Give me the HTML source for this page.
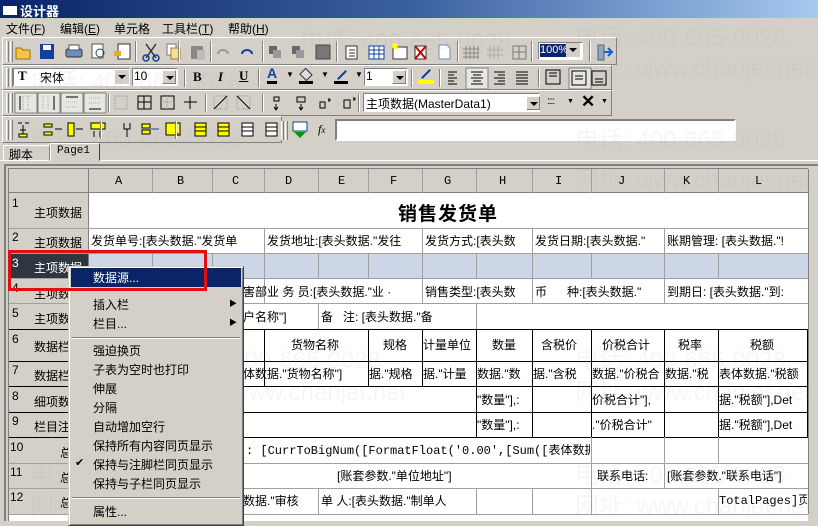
<!DOCTYPE html>
<html><head><meta charset="utf-8">
<style>
*{margin:0;padding:0;box-sizing:border-box}
body{width:818px;height:521px;overflow:hidden;background:#d4d0c8;font-family:"Liberation Sans","Noto Sans CJK SC",sans-serif;font-size:12px;color:#000;position:relative}
.a{position:absolute;white-space:nowrap}
.vl{position:absolute;width:1px;background:#a0a0a0}
.hl{position:absolute;height:1px;background:#a0a0a0}
.bk{background:#000}
.tb{position:absolute;border-top:1px solid #fff;border-left:1px solid #fff;border-right:1px solid #808080;border-bottom:1px solid #808080}
.grip{position:absolute;width:3px;border-left:1px solid #fff;border-right:1px solid #808080}
.sep{position:absolute;width:2px;border-left:1px solid #808080;border-right:1px solid #fff}
.t{position:absolute;white-space:nowrap;font-size:12px;line-height:14px;overflow:hidden}
.rl{position:absolute;font-size:12px;white-space:nowrap}
.mi{position:absolute;left:93px;font-size:12px;white-space:nowrap}
.wm{position:absolute;color:rgba(150,150,150,.09);font-size:24px;white-space:nowrap}
.in{position:absolute;background:#fff;border-top:1px solid #808080;border-left:1px solid #808080;border-right:1px solid #fff;border-bottom:1px solid #fff}
.dd{position:absolute;width:14px;height:14px;background:#d4d0c8;border:1px solid;border-color:#fff #808080 #808080 #fff}
.dd:after{content:"";position:absolute;left:3px;top:5px;border-left:4px solid transparent;border-right:4px solid transparent;border-top:4px solid #000}
</style></head><body>
<div class="a" style="left:0;top:0;width:818px;height:18px;background:linear-gradient(90deg,#0a246a,#3a5fa0 50%,#a6caf0)"></div>
<div class="a" style="left:3px;top:3px;width:14px;height:12px;background:#fff;border-top:3px solid #0a246a"></div>
<div class="a" style="left:20px;top:1px;color:#fff;font-weight:bold;font-size:13px">设计器</div>
<div class="a" style="left:6px;top:20px">文件(<u>F</u>)</div>
<div class="a" style="left:60px;top:20px">编辑(<u>E</u>)</div>
<div class="a" style="left:114px;top:20px">单元格</div>
<div class="a" style="left:162px;top:20px">工具栏(<u>T</u>)</div>
<div class="a" style="left:228px;top:20px">帮助(<u>H</u>)</div>
<div class="tb" style="left:2px;top:37px;width:615px;height:28px"></div>
<div class="tb" style="left:2px;top:65px;width:610px;height:25px"></div>
<div class="tb" style="left:2px;top:90px;width:610px;height:26px"></div>
<div class="tb" style="left:2px;top:116px;width:280px;height:27px"></div>
<div class="grip" style="left:6px;top:41px;height:21px"></div><div class="grip" style="left:10px;top:41px;height:21px"></div>
<div class="grip" style="left:6px;top:68px;height:19px"></div><div class="grip" style="left:10px;top:68px;height:19px"></div>
<div class="grip" style="left:6px;top:93px;height:20px"></div><div class="grip" style="left:10px;top:93px;height:20px"></div>
<div class="grip" style="left:6px;top:120px;height:20px"></div><div class="grip" style="left:10px;top:120px;height:20px"></div>
<svg class="a" style="left:14px;top:40px" width="605" height="24">
<path d="M2 8h5l2 2h7v9H2z" fill="#f4c542" stroke="#a07000"/>
<rect x="26" y="4" width="14" height="15" fill="#1040a0"/><rect x="29" y="5" width="8" height="5" fill="#fff"/>
<rect x="52" y="9" width="16" height="8" rx="2" fill="#6a8cc0" stroke="#333"/><rect x="55" y="5" width="10" height="5" fill="#fff" stroke="#555"/>
<rect x="78" y="4" width="11" height="14" fill="#fff" stroke="#555"/><circle cx="86" cy="13" r="4" fill="none" stroke="#246"/>
<rect x="104" y="4" width="12" height="15" fill="#fff" stroke="#333"/><rect x="100" y="11" width="7" height="5" fill="#e8b020"/>
<path d="M132 4l10 14M142 4l-10 14" stroke="#333" stroke-width="1.5"/><circle cx="132" cy="18" r="3" fill="none" stroke="#1040a0" stroke-width="1.5"/><circle cx="142" cy="18" r="3" fill="none" stroke="#1040a0" stroke-width="1.5"/>
<rect x="153" y="4" width="9" height="11" fill="#fff" stroke="#777"/><rect x="157" y="8" width="9" height="11" fill="#f6e090" stroke="#a08030"/>
<rect x="177" y="6" width="12" height="13" fill="#888"/><rect x="183" y="10" width="8" height="10" fill="#bbb"/>
<path d="M204 14a5 4 0 0 1 10 0" fill="none" stroke="#999" stroke-width="2"/><path d="M228 14a5 4 0 0 1 10 0" fill="none" stroke="#1040a0" stroke-width="2"/>
<rect x="255" y="6" width="8" height="8" fill="#666"/><rect x="259" y="10" width="8" height="8" fill="#999"/>
<rect x="278" y="6" width="8" height="8" fill="#666"/><rect x="282" y="10" width="8" height="8" fill="#999"/>
<rect x="302" y="5" width="14" height="14" fill="#777" stroke="#444"/>
<rect x="332" y="6" width="11" height="13" fill="#fff" stroke="#333"/><path d="M335 10h6M335 13h6M335 16h6" stroke="#333"/>
<rect x="355" y="6" width="15" height="13" fill="#fff" stroke="#1040a0"/><path d="M355 10h15M355 14h15M360 6v13M365 6v13" stroke="#1040a0"/>
<rect x="379" y="7" width="14" height="12" fill="#fff" stroke="#333"/><circle cx="381" cy="6" r="3" fill="#ff0"/>
<rect x="401" y="6" width="11" height="13" fill="#fff" stroke="#333"/><path d="M401 6l11 13M412 6l-11 13" stroke="#c00" stroke-width="2"/>
<path d="M425 5h8l3 3v11h-11z" fill="#fff" stroke="#6a8cc0"/>
<path d="M452 6v13M456 6v13M460 6v13M464 6v13M449 9h16M449 13h16M449 17h16" stroke="#888"/>
<path d="M476 6v13M480 6v13M484 6v13M473 10h16M473 15h16" stroke="#aaa"/>
<rect x="499" y="6" width="13" height="13" fill="none" stroke="#777"/><path d="M505 6v13M499 12h13" stroke="#777"/>
<rect x="584" y="5" width="6" height="15" fill="#8ab" stroke="#567"/><path d="M590 12h8M594 8l4 4-4 4" stroke="#1060d0" stroke-width="2" fill="none"/>
</svg>
<div class="sep" style="left:178px;top:41px;height:21px"></div><div class="sep" style="left:135px;top:41px;height:21px"></div>
<div class="sep" style="left:210px;top:41px;height:21px"></div><div class="sep" style="left:262px;top:41px;height:21px"></div>
<div class="sep" style="left:336px;top:41px;height:21px"></div><div class="sep" style="left:457px;top:41px;height:21px"></div>
<div class="sep" style="left:531px;top:41px;height:21px"></div><div class="sep" style="left:589px;top:41px;height:21px"></div>
<div class="in" style="left:538px;top:42px;width:45px;height:18px"><span style="position:absolute;left:1px;top:1px;background:#0a246a;color:#fff;font-size:11px;line-height:13px">100%</span></div>
<div class="dd" style="left:566px;top:43px;border:none"></div>
<div class="in" style="left:13px;top:68px;width:117px;height:18px"></div>
<div class="a" style="left:18px;top:68px;font-family:'Liberation Serif',serif;font-weight:bold;font-size:13px">T</div>
<div class="a" style="left:40px;top:69px">宋体</div>
<div class="dd" style="left:115px;top:70px;border:none"></div>
<div class="in" style="left:132px;top:68px;width:46px;height:18px"></div>
<div class="a" style="left:134px;top:69px">10</div>
<div class="dd" style="left:162px;top:70px"></div>
<div class="sep" style="left:184px;top:69px;height:18px"></div>
<div class="a" style="left:193px;top:69px;font-weight:bold;font-family:'Liberation Serif',serif;font-size:13px">B</div>
<div class="a" style="left:218px;top:69px;font-weight:bold;font-style:italic;font-family:'Liberation Serif',serif;font-size:13px">I</div>
<div class="a" style="left:239px;top:68px;font-weight:bold;text-decoration:underline;font-family:'Liberation Serif',serif;font-size:13px">U</div>
<div class="sep" style="left:258px;top:69px;height:18px"></div>
<div class="a" style="left:267px;top:66px;font-weight:bold;font-size:14px;color:#1040a0;border-bottom:3px solid #000;line-height:15px">A</div>
<div class="a" style="left:286px;top:70px;font-size:8px">▼</div>
<div class="a" style="left:299px;top:67px;width:14px;height:17px;border-bottom:3px solid #000"><div style="width:10px;height:9px;border:1px solid #333;transform:rotate(45deg);margin:3px 0 0 2px;background:#ddd"></div></div>
<div class="a" style="left:321px;top:70px;font-size:8px">▼</div>
<div class="a" style="left:334px;top:67px;width:14px;height:17px;border-bottom:3px solid #000"><div style="width:12px;height:2px;background:#1040a0;transform:rotate(-45deg);margin:7px 0 0 2px"></div></div>
<div class="a" style="left:355px;top:70px;font-size:8px">▼</div>
<div class="in" style="left:364px;top:68px;width:44px;height:18px"></div>
<div class="a" style="left:366px;top:69px">1</div>
<div class="dd" style="left:392px;top:70px"></div>
<div class="sep" style="left:411px;top:69px;height:18px"></div>
<div class="a" style="left:418px;top:67px;width:16px;height:17px;border-bottom:4px solid #ff0"><div style="width:12px;height:2px;background:#1040a0;transform:rotate(-45deg);margin:6px 0 0 2px"></div></div>
<div class="sep" style="left:439px;top:69px;height:18px"></div>
<svg class="a" style="left:444px;top:67px" width="170" height="22">
<path d="M4 5h9M4 8h6M4 11h9M4 14h6M4 17h9" stroke="#000"/>
<rect x="22" y="1" width="22" height="21" fill="#e8e6e0" stroke="#808080"/><path d="M27 5h12M29 8h8M27 11h12M29 14h8M27 17h12" stroke="#000"/>
<path d="M50 5h11M54 8h7M50 11h11M54 14h7M50 17h11" stroke="#000"/>
<path d="M72 5h12M72 8h12M72 11h12M72 14h12M72 17h12" stroke="#000"/>
<rect x="102" y="3" width="14" height="14" fill="none" stroke="#000"/><path d="M105 6h8M105 9h8" stroke="#000"/>
<rect x="125" y="1" width="22" height="21" fill="#e8e6e0" stroke="#808080"/><rect x="128" y="4" width="14" height="14" fill="none" stroke="#000"/><path d="M131 9h8M131 12h8" stroke="#000"/>
<rect x="148" y="4" width="14" height="14" fill="none" stroke="#000"/><path d="M151 12h8M151 15h8" stroke="#000"/>
</svg>
<div class="sep" style="left:538px;top:69px;height:18px"></div>
<svg class="a" style="left:14px;top:92px" width="350" height="22">
<rect x="1" y="1" width="22" height="20" fill="#e8e6e0" stroke="#808080"/><path d="M6 4v14" stroke="#000"/><path d="M9 4v14M14 4v14M9 4h8M9 18h8" stroke="#aaa" stroke-dasharray="1 1"/>
<rect x="24" y="1" width="22" height="20" fill="#e8e6e0" stroke="#808080"/><path d="M40 4v14" stroke="#000"/><path d="M29 4v14M34 4v14" stroke="#aaa" stroke-dasharray="1 1"/>
<rect x="47" y="1" width="22" height="20" fill="#e8e6e0" stroke="#808080"/><path d="M52 5h12" stroke="#000"/><path d="M52 10h12M52 15h12" stroke="#aaa" stroke-dasharray="1 1"/>
<rect x="70" y="1" width="22" height="20" fill="#e8e6e0" stroke="#808080"/><path d="M75 17h12" stroke="#000"/><path d="M75 6h12M75 11h12" stroke="#aaa" stroke-dasharray="1 1"/>
<rect x="101" y="4" width="12" height="13" fill="none" stroke="#999" stroke-dasharray="1 1"/>
<rect x="124" y="4" width="13" height="13" fill="none" stroke="#000"/><path d="M130 4v13M124 10h13" stroke="#000"/>
<rect x="147" y="4" width="13" height="13" fill="none" stroke="#000"/><path d="M153 4v13M147 10h13" stroke="#999" stroke-dasharray="1 1"/>
<path d="M176 4v13M170 10h13" stroke="#000"/>
<rect x="200" y="4" width="13" height="13" fill="none" stroke="#999" stroke-dasharray="1 1"/><path d="M200 17l13-13" stroke="#000"/>
<rect x="223" y="4" width="13" height="13" fill="none" stroke="#999" stroke-dasharray="1 1"/><path d="M223 4l13 13" stroke="#000"/>
<path d="M260 5h5v4h-5zM262 12v5M260 15l2 3 2-3" stroke="#000" fill="none"/>
<path d="M283 5h8v5h-8zM287 12v5M285 15l2 3 2-3" stroke="#000" fill="none"/>
<path d="M306 10h5v6h-5zM314 8h3M315 6v4" stroke="#000" fill="none"/>
<path d="M330 8h6v8h-6zM339 7h3M340 5v4" stroke="#000" fill="none"/>
</svg>
<div class="sep" style="left:108px;top:94px;height:18px"></div><div class="sep" style="left:205px;top:94px;height:18px"></div><div class="sep" style="left:262px;top:94px;height:18px"></div>
<div class="sep" style="left:358px;top:94px;height:18px"></div>
<div class="in" style="left:363px;top:93px;width:177px;height:19px"></div>
<div class="a" style="left:366px;top:95px;font-size:12px">主项数据(MasterData1)</div>
<div class="dd" style="left:526px;top:96px"></div>
<div class="a" style="left:547px;top:96px;font-size:10px;letter-spacing:-1px">::::</div><div class="a" style="left:567px;top:98px;font-size:7px">▼</div>
<div class="a" style="left:581px;top:92px;font-size:17px;font-weight:bold">✕</div><div class="a" style="left:601px;top:98px;font-size:7px">▼</div>
<svg class="a" style="left:14px;top:119px" width="320" height="22">
<g fill="#ff0" stroke="#000"><path d="M4 4h4M11 4h4M9 6v12M6 11h6" fill="none"/><rect x="5" y="15" width="8" height="3"/>
<rect x="30" y="5" width="8" height="3"/><rect x="30" y="13" width="8" height="3"/><path d="M41 10h7" fill="none"/>
<rect x="54" y="4" width="6" height="13"/><path d="M62 10h7" fill="none"/>
<rect x="77" y="4" width="14" height="6"/><path d="M80 12v6M86 12v6" fill="none"/>
<path d="M110 4v6h6v-6M113 10v8" fill="none"/>
<rect x="128" y="5" width="8" height="4"/><rect x="128" y="11" width="8" height="4"/><path d="M137 10h8" stroke="#1040a0" fill="none"/>
<rect x="152" y="4" width="14" height="12"/><path d="M162 13l4 4" stroke="#c00" fill="none"/>
<rect x="181" y="4" width="11" height="13"/><path d="M181 8h11M181 12h11" fill="none"/>
<rect x="204" y="4" width="11" height="13"/><path d="M204 8h11M204 12h11" fill="none"/>
<rect x="228" y="4" width="11" height="13" fill="#fff"/><path d="M228 8h11M228 12h11" fill="none"/>
<rect x="252" y="4" width="11" height="13" fill="#fff"/><path d="M252 8h11M252 12h11" fill="none"/></g>
<rect x="279" y="3" width="14" height="9" fill="#fff" stroke="#1040a0"/><path d="M280 13h12l-6 6z" fill="#090"/>
</svg>
<div class="sep" style="left:100px;top:121px;height:18px"></div><div class="sep" style="left:175px;top:121px;height:18px"></div>
<div class="grip" style="left:281px;top:121px;height:19px"></div><div class="grip" style="left:285px;top:121px;height:19px"></div>
<div class="a" style="left:318px;top:122px;font-style:italic;font-family:'Liberation Serif',serif;font-size:12px">f<span style="font-size:9px">x</span></div>
<div class="in" style="left:335px;top:119px;width:401px;height:22px;border:2px solid;border-color:#808080 #fff #fff #808080"></div>
<div class="a" style="left:0;top:160px;width:818px;height:2px;border-top:1px solid #fff"></div>
<div class="a" style="left:3px;top:145px;width:47px;height:16px;border:1px solid;border-color:#fff #808080 transparent #fff;padding-left:5px">脚本</div>
<div class="a" style="left:50px;top:143px;width:50px;height:18px;border:1px solid;border-color:#fff #404040 transparent #fff;background:#d4d0c8;padding:1px 0 0 6px;font-family:'Liberation Mono',monospace;font-size:11px">Page1</div>
<div class="a" style="left:4px;top:164px;width:814px;height:357px;border-top:2px solid #808080;border-left:2px solid #808080"></div>
<div class="a" style="left:8px;top:168px;width:800px;height:353px;background:#fff;border-left:1px solid #808080;border-top:1px solid #808080"></div>
<div class="a" style="left:808px;top:168px;width:10px;height:353px;background:#d4d0c8"></div>
<div class="a" style="left:9px;top:169px;width:799px;height:24px;background:#d4d0c8;border-bottom:1px solid #808080"></div>
<div class="a" style="left:9px;top:193px;width:79px;height:321px;background:#d4d0c8"></div>
<div class="a" style="left:9px;top:253px;width:79px;height:25px;background:#2e3640"></div>
<div class="a" style="left:88px;top:253px;width:720px;height:25px;background:#cdd6e6"></div>
<div class="vl" style="left:88px;top:169px;height:345px;background:#808080"></div>
<div class="vl" style="left:808px;top:169px;height:345px;background:#808080"></div>
<div class="a" style="left:88px;top:174px;width:720px;height:14px;font-family:'Liberation Mono',monospace;font-size:12px">
<span class="a" style="left:27px">A</span><span class="a" style="left:89px">B</span><span class="a" style="left:144px">C</span><span class="a" style="left:197px">D</span><span class="a" style="left:250px">E</span><span class="a" style="left:302px">F</span><span class="a" style="left:356px">G</span><span class="a" style="left:411px">H</span><span class="a" style="left:467px">I</span><span class="a" style="left:530px">J</span><span class="a" style="left:595px">K</span><span class="a" style="left:667px">L</span></div>
<div class="vl" style="left:152px;top:169px;height:24px"></div><div class="vl" style="left:212px;top:169px;height:24px"></div><div class="vl" style="left:264px;top:169px;height:24px"></div><div class="vl" style="left:318px;top:169px;height:24px"></div><div class="vl" style="left:368px;top:169px;height:24px"></div><div class="vl" style="left:422px;top:169px;height:24px"></div><div class="vl" style="left:476px;top:169px;height:24px"></div><div class="vl" style="left:532px;top:169px;height:24px"></div><div class="vl" style="left:591px;top:169px;height:24px"></div><div class="vl" style="left:664px;top:169px;height:24px"></div><div class="vl" style="left:718px;top:169px;height:24px"></div>
<div class="hl" style="left:9px;top:228px;width:799px"></div>
<div class="hl" style="left:9px;top:253px;width:799px"></div>
<div class="hl" style="left:9px;top:278px;width:799px"></div>
<div class="hl" style="left:9px;top:303px;width:799px"></div>
<div class="hl" style="left:9px;top:329px;width:799px;background:#000"></div>
<div class="hl" style="left:9px;top:361px;width:799px;background:#000"></div>
<div class="hl" style="left:9px;top:386px;width:799px;background:#000"></div>
<div class="hl" style="left:9px;top:412px;width:799px;background:#000"></div>
<div class="hl" style="left:9px;top:437px;width:799px;background:#000"></div>
<div class="hl" style="left:9px;top:463px;width:799px"></div>
<div class="hl" style="left:9px;top:488px;width:799px"></div>
<div class="hl" style="left:9px;top:514px;width:799px"></div>
<div class="rl" style="left:12px;top:196px">1</div><div class="rl" style="left:34px;top:204px">主项数据</div>
<div class="rl" style="left:12px;top:230px">2</div><div class="rl" style="left:34px;top:234px">主项数据</div>
<div class="rl" style="left:12px;top:256px;color:#fff">3</div><div class="rl" style="left:34px;top:259px;color:#fff">主项数据</div>
<div class="rl" style="left:12px;top:281px">4</div><div class="rl" style="left:34px;top:285px">主项数据</div>
<div class="rl" style="left:12px;top:306px">5</div><div class="rl" style="left:34px;top:310px">主项数据</div>
<div class="rl" style="left:12px;top:332px">6</div><div class="rl" style="left:34px;top:338px">数据栏</div>
<div class="rl" style="left:12px;top:363px">7</div><div class="rl" style="left:34px;top:367px">数据栏</div>
<div class="rl" style="left:12px;top:389px">8</div><div class="rl" style="left:34px;top:393px">细项数据</div>
<div class="rl" style="left:12px;top:414px">9</div><div class="rl" style="left:34px;top:418px">栏目注</div>
<div class="rl" style="left:10px;top:440px">10</div><div class="rl" style="left:60px;top:444px">总</div>
<div class="rl" style="left:10px;top:465px">11</div><div class="rl" style="left:60px;top:469px">总</div>
<div class="rl" style="left:10px;top:490px">12</div><div class="rl" style="left:60px;top:494px">总</div>
<div class="a" style="left:398px;top:199px;font-size:19px;font-weight:bold;letter-spacing:1px">销售发货单</div>
<div class="vl" style="left:264px;top:228px;height:25px"></div><div class="vl" style="left:422px;top:228px;height:25px"></div><div class="vl" style="left:532px;top:228px;height:25px"></div><div class="vl" style="left:664px;top:228px;height:25px"></div>
<div class="t" style="left:91px;top:234px;width:172px">发货单号:[表头数据."发货单</div>
<div class="t" style="left:267px;top:234px;width:154px">发货地址:[表头数据."发往</div>
<div class="t" style="left:425px;top:234px;width:106px">发货方式:[表头数</div>
<div class="t" style="left:535px;top:234px;width:128px">发货日期:[表头数据."</div>
<div class="t" style="left:667px;top:234px;width:140px">账期管理: [表头数据."!</div>
<div class="vl" style="left:152px;top:253px;height:25px"></div><div class="vl" style="left:212px;top:253px;height:25px"></div><div class="vl" style="left:264px;top:253px;height:25px"></div><div class="vl" style="left:318px;top:253px;height:25px"></div><div class="vl" style="left:368px;top:253px;height:25px"></div><div class="vl" style="left:422px;top:253px;height:25px"></div><div class="vl" style="left:476px;top:253px;height:25px"></div><div class="vl" style="left:532px;top:253px;height:25px"></div><div class="vl" style="left:591px;top:253px;height:25px"></div><div class="vl" style="left:664px;top:253px;height:25px"></div><div class="vl" style="left:718px;top:253px;height:25px"></div>
<div class="vl" style="left:264px;top:278px;height:25px"></div><div class="vl" style="left:422px;top:278px;height:25px"></div><div class="vl" style="left:532px;top:278px;height:25px"></div><div class="vl" style="left:664px;top:278px;height:25px"></div>
<div class="t" style="left:243px;top:285px">害部</div>
<div class="t" style="left:267px;top:285px;width:154px">业 务 员:[表头数据."业 ·</div>
<div class="t" style="left:425px;top:285px;width:106px">销售类型:[表头数</div>
<div class="t" style="left:535px;top:285px;width:128px">币&nbsp;&nbsp;&nbsp;&nbsp;&nbsp;&nbsp;种:[表头数据."</div>
<div class="t" style="left:667px;top:285px;width:140px">到期日: [表头数据."到:</div>
<div class="vl" style="left:318px;top:303px;height:26px"></div><div class="vl" style="left:476px;top:303px;height:26px"></div>
<div class="t" style="left:243px;top:310px">户名称"]</div>
<div class="t" style="left:321px;top:310px;width:154px">备&nbsp;&nbsp;&nbsp;注: [表头数据."备</div>
<div class="vl bk" style="left:264px;top:329px;height:57px"></div><div class="vl bk" style="left:368px;top:329px;height:57px"></div><div class="vl bk" style="left:422px;top:329px;height:57px"></div>
<div class="vl bk" style="left:476px;top:329px;height:108px"></div><div class="vl bk" style="left:532px;top:329px;height:108px"></div><div class="vl bk" style="left:591px;top:329px;height:108px"></div><div class="vl bk" style="left:664px;top:329px;height:108px"></div><div class="vl bk" style="left:718px;top:329px;height:108px"></div><div class="vl bk" style="left:807px;top:329px;height:108px"></div>
<div class="t" style="left:291px;top:338px">货物名称</div>
<div class="t" style="left:383px;top:338px">规格</div>
<div class="t" style="left:423px;top:338px">计量单位</div>
<div class="t" style="left:492px;top:338px">数量</div>
<div class="t" style="left:541px;top:338px">含税价</div>
<div class="t" style="left:602px;top:338px">价税合计</div>
<div class="t" style="left:678px;top:338px">税率</div>
<div class="t" style="left:750px;top:338px">税额</div>
<div class="t" style="left:243px;top:367px;width:124px">体数据."货物名称"]</div>
<div class="t" style="left:369px;top:367px;width:52px">据."规格</div>
<div class="t" style="left:423px;top:367px;width:52px">据."计量</div>
<div class="t" style="left:477px;top:367px;width:54px">数据."数</div>
<div class="t" style="left:533px;top:367px;width:57px">据."含税</div>
<div class="t" style="left:592px;top:367px;width:71px">数据."价税合</div>
<div class="t" style="left:665px;top:367px;width:52px">数据."税</div>
<div class="t" style="left:719px;top:367px;width:88px">表体数据."税额</div>
<div class="t" style="left:477px;top:393px;width:54px">"数量"],:</div>
<div class="t" style="left:592px;top:393px;width:71px">价税合计"],</div>
<div class="t" style="left:719px;top:393px;width:88px">据."税额"],Det</div>
<div class="t" style="left:477px;top:418px;width:54px">"数量"],:</div>
<div class="t" style="left:592px;top:418px;width:71px">."价税合计"</div>
<div class="t" style="left:719px;top:418px;width:88px">据."税额"],Det</div>
<div class="vl" style="left:591px;top:437px;height:26px"></div><div class="vl" style="left:664px;top:437px;height:26px"></div><div class="vl" style="left:718px;top:437px;height:26px"></div>
<div class="t" style="left:246px;top:444px;width:344px;font-family:'Liberation Mono','Noto Sans CJK SC',monospace">: [CurrToBigNum([FormatFloat('0.00',[Sum([表体数据</div>
<div class="vl" style="left:591px;top:463px;height:25px"></div><div class="vl" style="left:664px;top:463px;height:25px"></div>
<div class="t" style="left:337px;top:469px">[账套参数."单位地址"]</div>
<div class="t" style="left:597px;top:469px">联系电话:</div>
<div class="t" style="left:667px;top:469px">[账套参数."联系电话"]</div>
<div class="vl" style="left:318px;top:488px;height:26px"></div><div class="vl" style="left:476px;top:488px;height:26px"></div><div class="vl" style="left:532px;top:488px;height:26px"></div><div class="vl" style="left:591px;top:488px;height:26px"></div><div class="vl" style="left:718px;top:488px;height:26px"></div>
<div class="t" style="left:243px;top:494px;width:74px">数据."审核</div>
<div class="t" style="left:321px;top:494px;width:154px">单 人:[表头数据."制单人</div>
<div class="t" style="left:719px;top:494px;width:88px;font-family:'Liberation Mono','Noto Sans CJK SC',monospace">TotalPages]页</div>
<div class="wm" style="left:30px;top:62px">电话: 400-665-0028</div>
<div class="wm" style="left:300px;top:22px">电话: 400-665-0028</div>
<div class="wm" style="left:575px;top:18px">电话: 400-665-0028</div>
<div class="wm" style="left:575px;top:48px">网址: www.chanjet.net</div>
<div class="wm" style="left:30px;top:120px">电话: 400-665-0028</div>
<div class="wm" style="left:575px;top:120px">电话: 400-665-0028</div>
<div class="wm" style="left:575px;top:160px">网址: www.chanjet.net</div>
<div class="wm" style="left:170px;top:340px">电话: 400-665-0028</div>
<div class="wm" style="left:170px;top:372px">网址: www.chanjet.net</div>
<div class="wm" style="left:575px;top:340px">电话: 400-665-0028</div>
<div class="wm" style="left:575px;top:372px">网址: www.chanjet.net</div>
<div class="wm" style="left:30px;top:455px">电话: 400-665-0028</div>
<div class="wm" style="left:30px;top:486px">网址: www.chanjet.net</div>
<div class="wm" style="left:575px;top:455px">电话: 400-665-0028</div>
<div class="wm" style="left:575px;top:486px">网址: www.chanjet.net</div>
<div class="a" style="left:68px;top:266px;width:176px;height:260px;background:#d4d0c8;border:1px solid;border-color:#d4d0c8 #404040 #404040 #d4d0c8;box-shadow:inset 1px 1px 0 #fff,inset -1px -1px 0 #808080"></div>
<div class="a" style="left:71px;top:268px;width:170px;height:19px;background:#0a246a"></div>
<div class="mi" style="top:269px;color:#fff">数据源...</div>
<div class="mi" style="top:296px">插入栏</div><div class="a" style="left:229px;top:298px;font-size:8px">▶</div>
<div class="mi" style="top:315px">栏目...</div><div class="a" style="left:229px;top:317px;font-size:8px">▶</div>
<div class="a" style="left:72px;top:337px;width:168px;height:2px;border-top:1px solid #808080;border-bottom:1px solid #fff"></div>
<div class="mi" style="top:342px">强迫换页</div>
<div class="mi" style="top:361px">子表为空时也打印</div>
<div class="mi" style="top:380px">伸展</div>
<div class="mi" style="top:399px">分隔</div>
<div class="mi" style="top:418px">自动增加空行</div>
<div class="mi" style="top:437px">保持所有内容同页显示</div>
<div class="a" style="left:75px;top:456px;font-size:11px">✔</div>
<div class="mi" style="top:456px">保持与注脚栏同页显示</div>
<div class="mi" style="top:475px">保持与子栏同页显示</div>
<div class="a" style="left:72px;top:497px;width:168px;height:2px;border-top:1px solid #808080;border-bottom:1px solid #fff"></div>
<div class="mi" style="top:503px">属性...</div>
<div class="a" style="left:8px;top:250px;width:199px;height:41px;border:3px solid #e01010"></div>
</body></html>
